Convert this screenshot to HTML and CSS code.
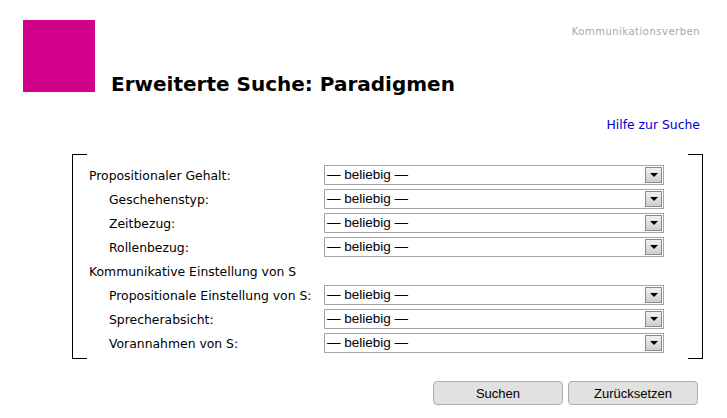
FILE: index.html
```html
<!DOCTYPE html>
<html lang="de">
<head>
  <meta charset="UTF-8">
  <title>Erweiterte Suche: Paradigmen</title>
  <link rel="stylesheet" href="styles.css">
</head>
<body>
  <header class="top">
    <div class="logo"></div>
    <h1>Erweiterte Suche: Paradigmen</h1>
    <span class="site">Kommunikationsverben</span>
  </header>

  <div class="help"><a href="#">Hilfe zur Suche</a></div>

  <form class="search">
    <div class="bracket">
      <label class="lbl">Propositionaler Gehalt:</label>
      <div class="sel">— beliebig —<span class="arrow"></span></div>

      <label class="lbl sub">Geschehenstyp:</label>
      <div class="sel">— beliebig —<span class="arrow"></span></div>

      <label class="lbl sub">Zeitbezug:</label>
      <div class="sel">— beliebig —<span class="arrow"></span></div>

      <label class="lbl sub">Rollenbezug:</label>
      <div class="sel">— beliebig —<span class="arrow"></span></div>

      <div class="lbl group">Kommunikative Einstellung von S</div>

      <label class="lbl sub">Propositionale Einstellung von S:</label>
      <div class="sel">— beliebig —<span class="arrow"></span></div>

      <label class="lbl sub">Sprecherabsicht:</label>
      <div class="sel">— beliebig —<span class="arrow"></span></div>

      <label class="lbl sub">Vorannahmen von S:</label>
      <div class="sel">— beliebig —<span class="arrow"></span></div>
    </div>

    <div class="buttons">
      <button type="button">Suchen</button>
      <button type="button">Zurücksetzen</button>
    </div>
  </form>
</body>
</html>
```

FILE: styles.css
```css
* {box-sizing:border-box;margin:0;padding:0;}
body {background:#fff;color:#000;font-family:'DejaVu Sans',Verdana,sans-serif;font-size:12.4px;}

.top {display:flex;align-items:flex-end;padding:20px 27px 0 23px;}
.logo {width:72px;height:72px;background:#d2008a;flex:none;}
.top h1 {font-size:20px;line-height:24px;font-weight:700;margin:0 0 -4px 16px;}
.site {align-self:flex-start;margin-left:auto;margin-top:6px;font-size:10px;letter-spacing:0.5px;color:#a8a8a8;}

.help {text-align:right;padding:25px 27px 0 0;line-height:16px;}
.help a {color:#0000d0;text-decoration:none;}

.search {margin:21px 0 0 72px;width:631px;}
.bracket {
  display:grid;grid-template-columns:235px 340px;grid-auto-rows:24px;align-items:center;
  padding:9px 37px 4px 16px;
  border-left:1px solid #000;border-right:1px solid #000;
  background:
    linear-gradient(#000,#000) left top/14px 1px no-repeat,
    linear-gradient(#000,#000) left bottom/14px 1px no-repeat,
    linear-gradient(#000,#000) right top/14px 1px no-repeat,
    linear-gradient(#000,#000) right bottom/14px 1px no-repeat;
}
.lbl {white-space:nowrap;}
.lbl.sub {padding-left:20px;}
.lbl.group {grid-column:1 / 3;}

.sel {
  position:relative;height:20px;border:1px solid #a5a5a5;
  font-family:'Liberation Sans',Arial,sans-serif;font-size:13.5px;line-height:18px;padding-left:2px;
}
.arrow {
  position:absolute;right:1px;top:1px;width:17px;height:16px;
  border:1px solid #8a8a8a;background:linear-gradient(#f0f0f0,#cfcfcf);
}
.arrow::after {
  content:"";position:absolute;left:4px;top:5px;
  border-left:4px solid transparent;border-right:4px solid transparent;border-top:4px solid #000;
}

.buttons {display:flex;justify-content:flex-end;gap:5px;margin:22px 5px 0 0;}
.buttons button {
  width:130px;height:24px;border:1px solid #adadad;border-radius:4px;background:#e1e1e1;
  font-family:'Liberation Sans',Arial,sans-serif;font-size:13px;color:#000;
}
```
